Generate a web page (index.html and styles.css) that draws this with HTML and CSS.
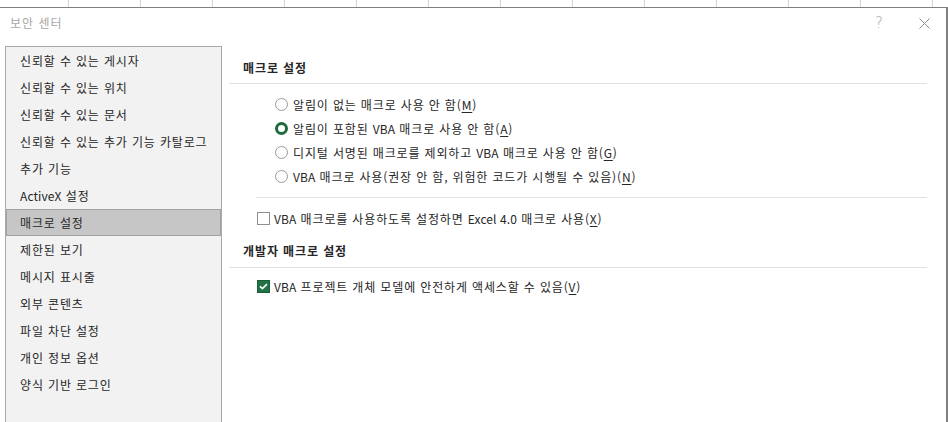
FILE: index.html
```html
<!DOCTYPE html>
<html lang="ko">
<head>
<meta charset="utf-8">
<title>보안 센터</title>
<link rel="stylesheet" href="styles.css">
</head>
<body>
<div class="sheet"></div>
<div class="dialog">
  <div class="titlebar">
    <span class="title">보안 센터</span>
    <span class="help">?</span>
    <svg class="close" width="11" height="11" viewBox="0 0 11 11"><path d="M0.5 0.5L10.5 10.5M10.5 0.5L0.5 10.5" stroke="#8c8c8c" stroke-width="1" fill="none"/></svg>
  </div>
  <div class="main">
    <ul class="nav">
      <li class="nav-item">신뢰할 수 있는 게시자</li>
      <li class="nav-item">신뢰할 수 있는 위치</li>
      <li class="nav-item">신뢰할 수 있는 문서</li>
      <li class="nav-item">신뢰할 수 있는 추가 기능 카탈로그</li>
      <li class="nav-item">추가 기능</li>
      <li class="nav-item"><span class="lat">ActiveX</span> 설정</li>
      <li class="nav-item selected">매크로 설정</li>
      <li class="nav-item">제한된 보기</li>
      <li class="nav-item">메시지 표시줄</li>
      <li class="nav-item">외부 콘텐츠</li>
      <li class="nav-item">파일 차단 설정</li>
      <li class="nav-item">개인 정보 옵션</li>
      <li class="nav-item">양식 기반 로그인</li>
    </ul>
    <div class="content">
      <div class="section-head">매크로 설정</div>
      <div class="radios">
        <div class="option"><span class="radio"></span><span>알림이 없는 매크로 사용 안 함(<u>M</u>)</span></div>
        <div class="option"><span class="radio on"></span><span>알림이 포함된 <span class="lat">VBA</span> 매크로 사용 안 함(<u>A</u>)</span></div>
        <div class="option"><span class="radio"></span><span>디지털 서명된 매크로를 제외하고 <span class="lat">VBA</span> 매크로 사용 안 함(<u>G</u>)</span></div>
        <div class="option"><span class="radio"></span><span><span class="lat">VBA</span> 매크로 사용(권장 안 함, 위험한 코드가 시행될 수 있음)(<u>N</u>)</span></div>
      </div>
      <div class="sub-sep"></div>
      <div class="option check-row first-check"><span class="check"></span><span><span class="lat">VBA</span> 매크로를 사용하도록 설정하면 <span class="lat">Excel 4.0</span> 매크로 사용(<u>X</u>)</span></div>
      <div class="section-head second">개발자 매크로 설정</div>
      <div class="option check-row dev-check"><span class="check on"><svg width="9" height="7" viewBox="0 0 9 7"><path d="M1 3.4L3.4 5.6L8 1.2" stroke="#fff" stroke-width="1.6" fill="none"/></svg></span><span><span class="lat">VBA</span> 프로젝트 개체 모델에 안전하게 액세스할 수 있음(<u>V</u>)</span></div>
    </div>
  </div>
</div>
</body>
</html>
```

FILE: styles.css
```css
* { box-sizing: border-box; }
html, body {
  margin: 0;
  padding: 0;
  width: 948px;
  height: 422px;
  overflow: hidden;
  background: #ffffff;
  font-family: "Noto Sans CJK KR", "Noto Sans", sans-serif;
  font-size: 12px;
  color: #262626;
}
.sheet {
  height: 7px;
  background-color: #ffffff;
  background-image: linear-gradient(to right, #d4d4d4 1px, transparent 1px);
  background-size: 72px 100%;
  background-position: 68px 0;
}
.dialog {
  width: 948px;
  height: 415px;
  border-top: 1px solid #7f7f7f;
  border-right: 2px solid #7f7f7f;
  background: #ffffff;
  overflow: hidden;
}
.titlebar {
  height: 30px;
  display: flex;
  align-items: center;
  padding-left: 10px;
  padding-right: 16px;
}
.title {
  color: #a8a8a8;
  font-size: 12px;
  line-height: 16px;
  letter-spacing: 1px;
}
.help {
  margin-left: auto;
  width: 14px;
  text-align: center;
  color: #a6a6a6;
  font-family: "DejaVu Sans", sans-serif;
  font-weight: 200;
  font-size: 15px;
  line-height: 16px;
}
.close {
  margin-left: 33px;
  display: block;
}
.main {
  display: flex;
  padding-top: 8px;
  height: 384px;
}
.nav {
  list-style: none;
  margin: 0 0 0 5px;
  padding: 0;
  width: 217px;
  height: 420px;
  flex: none;
  background: #f2f2f2;
  border: 1px solid #a9a9a9;
}
.nav-item {
  height: 27px;
  line-height: 25px;
  padding-left: 13px;
  border: 1px solid transparent;
  letter-spacing: 0.85px;
  white-space: nowrap;
}
.nav-item.selected {
  background: #c6c6c6;
  border-color: #a2a2a2;
}
.content {
  margin-left: 7px;
  width: 698px;
  flex: none;
}
.section-head {
  font-weight: bold;
  padding: 12px 0 5px 14px;
  line-height: 20px;
  border-bottom: 1px solid #e1e1e1;
  letter-spacing: 0.9px;
}
.section-head.second {
  padding-top: 11px;
  padding-bottom: 6px;
}
.radios {
  padding: 8px 0 0 46px;
}
.option {
  display: flex;
  align-items: center;
  height: 24px;
  white-space: nowrap;
  letter-spacing: 0.85px;
}
.lat {
  letter-spacing: 0.1px;
}
.radio {
  width: 13px;
  height: 13px;
  border-radius: 50%;
  border: 1px solid #9a9a9a;
  background: #ffffff;
  margin-right: 5px;
  flex: none;
}
.radio.on {
  border: 3.5px solid #1d6b3c;
}
.sub-sep {
  margin: 9px 0 0 27px;
  border-top: 1px solid #e1e1e1;
}
.check-row {
  padding-left: 28px;
}
.first-check {
  margin-top: 8px;
}
.dev-check {
  margin-top: 6px;
}
.check {
  width: 13px;
  height: 13px;
  border: 1px solid #8f8f8f;
  background: #ffffff;
  margin-right: 4px;
  flex: none;
  display: flex;
  align-items: center;
  justify-content: center;
}
.check.on {
  background: #217346;
  border-color: #1b5e39;
}
.check svg { display: block; }
u { text-underline-offset: 2px; }
```
